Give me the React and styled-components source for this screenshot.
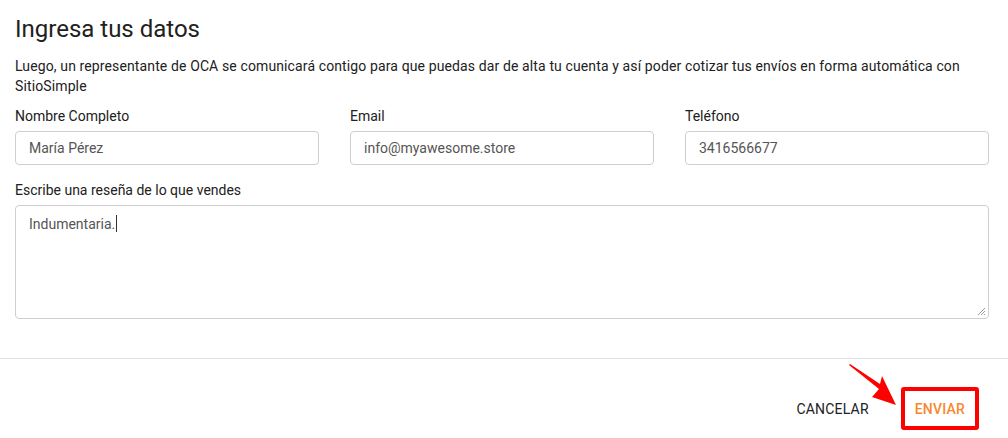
import React from "react";
import styled, { createGlobalStyle } from "styled-components";

const Global = createGlobalStyle`
  html, body { margin: 0; padding: 0; background: #fff; }
  body { font-family: Roboto, "Liberation Sans", sans-serif; color: #212121; }
  * { box-sizing: border-box; }
`;

const Page = styled.div`
  width: 1008px;
  height: 438px;
  overflow: hidden;
  position: relative;
  background: #fff;
`;

const Body = styled.div`
  padding: 14px 19px 0 15px;
`;

const Title = styled.h2`
  margin: 0;
  font-size: 24px;
  font-weight: 400;
  line-height: 30px;
  color: #212121;
`;

const Lead = styled.p`
  margin: 12px 0 0;
  font-size: 14px;
  line-height: 20px;
  letter-spacing: 0.12px;
  color: #212121;
`;

const FieldGrid = styled.div`
  display: grid;
  grid-template-columns: repeat(3, 1fr);
  column-gap: 31px;
  margin-top: 10px;
`;

const Field = styled.label`
  display: flex;
  flex-direction: column;
  margin-top: ${(p) => p.$top || 0}px;
`;

const Label = styled.span`
  font-size: 14px;
  line-height: 20px;
  color: #212121;
  margin-bottom: 5px;
`;

const Input = styled.input`
  height: 34px;
  width: 100%;
  border: 1px solid #cfcfcf;
  border-radius: 4px;
  padding: 0 13px;
  font-family: Roboto, "Liberation Sans", sans-serif;
  font-size: 14px;
  color: #555;
  background: #fff;
  outline: none;
`;

const TextBox = styled.div`
  position: relative;
  height: 114px;
  border: 1px solid #cfcfcf;
  border-radius: 4px;
  padding: 8px 13px;
  font-size: 14px;
  line-height: 20px;
  color: #555;
`;

const Caret = styled.span`
  display: inline-block;
  width: 1px;
  height: 17px;
  background: #333;
  vertical-align: -3px;
  margin-left: 1px;
`;

const Grip = styled.svg`
  position: absolute;
  right: 2px;
  bottom: 2px;
`;

const Divider = styled.hr`
  margin: 39px 0 0;
  border: 0;
  border-top: 1px solid #e0e0e0;
`;

const Footer = styled.div`
  display: flex;
  justify-content: flex-end;
  align-items: center;
  gap: 24px;
  padding: 28px 29px 0 0;
`;

const TextButton = styled.button`
  background: transparent;
  border: 0;
  padding: 0 8px;
  height: 35px;
  font-family: Roboto, "Liberation Sans", sans-serif;
  font-size: 14px;
  font-weight: ${(p) => (p.$primary ? 500 : 400)};
  letter-spacing: 0.2px;
  color: ${(p) => (p.$primary ? "#f7882f" : "#212121")};
  cursor: pointer;
`;

const Highlight = styled.div`
  border: 4px solid #ff0000;
  border-radius: 3px;
  padding: 0 2px;
  display: flex;
`;

const Arrow = styled.svg`
  position: absolute;
  left: 846px;
  top: 362px;
`;

export default function App() {
  return (
    <Page>
      <Global />
      <Body>
        <Title>Ingresa tus datos</Title>
        <Lead>
          Luego, un representante de OCA se comunicará contigo para que puedas dar de alta tu cuenta y así poder cotizar tus envíos en forma automática con SitioSimple
        </Lead>
        <FieldGrid>
          <Field>
            <Label>Nombre Completo</Label>
            <Input defaultValue="María Pérez" />
          </Field>
          <Field>
            <Label>Email</Label>
            <Input defaultValue="info@myawesome.store" />
          </Field>
          <Field>
            <Label>Teléfono</Label>
            <Input defaultValue="3416566677" />
          </Field>
        </FieldGrid>
        <Field $top={15}>
          <Label>Escribe una reseña de lo que vendes</Label>
          <TextBox role="textbox">
            Indumentaria.<Caret />
            <Grip width="10" height="10" viewBox="0 0 10 10">
              <path d="M9 2 L2 9 M9 5 L5 9 M9 8 L8 9" stroke="#999" strokeWidth="1" />
            </Grip>
          </TextBox>
        </Field>
      </Body>
      <Divider />
      <Footer>
        <TextButton>CANCELAR</TextButton>
        <Highlight>
          <TextButton $primary>ENVIAR</TextButton>
        </Highlight>
      </Footer>
      <Arrow width="54" height="46" viewBox="0 0 54 46">
        <polygon points="3,3 4,2 34,22 36,14 50,43 26,35 33,27" fill="#ff0000" />
      </Arrow>
    </Page>
  );
}
